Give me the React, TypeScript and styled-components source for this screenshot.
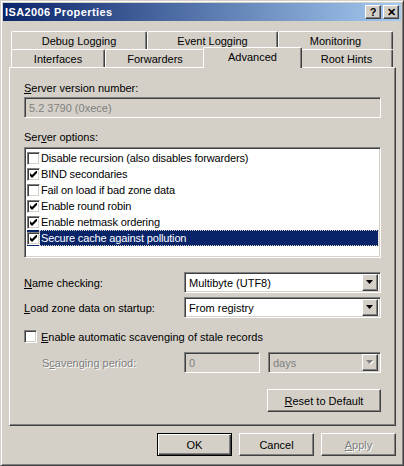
import styled, { createGlobalStyle, css } from 'styled-components';

const GlobalStyle = createGlobalStyle`
  html, body {
    margin: 0;
    padding: 0;
    background: #d4d0c8;
  }
  body {
    font-family: Tahoma, "Liberation Sans", Arial, sans-serif;
    font-size: 11px;
    color: #000;
  }
`;

const raised = css`
  border: 1px solid;
  border-color: #fff #404040 #404040 #fff;
  box-shadow: inset -1px -1px #808080, inset 1px 1px #d4d0c8;
`;

const sunken = css`
  border: 1px solid;
  border-color: #808080 #fff #fff #808080;
  box-shadow: inset 1px 1px #404040, inset -1px -1px #d4d0c8;
`;

const grayText = css`
  color: #808080;
  text-shadow: 1px 1px #fff;
`;

const Window = styled.div`
  box-sizing: border-box;
  width: 404px;
  height: 466px;
  display: flex;
  flex-direction: column;
  padding: 2px;
  background: #d4d0c8;
  border: 1px solid;
  border-color: #d4d0c8 #404040 #404040 #d4d0c8;
  box-shadow: inset 1px 1px #fff, inset -1px -1px #808080;
`;

const TitleBar = styled.div`
  height: 18px;
  display: flex;
  align-items: center;
  padding: 0 2px 0 2px;
  background: linear-gradient(to right, #0a246a, #a6caf0);
  color: #fff;
  font-weight: bold;
  letter-spacing: 0.4px;
`;

const CaptionButtons = styled.div`
  margin-left: auto;
  display: flex;
  gap: 2px;
`;

const CaptionButton = styled.div`
  box-sizing: border-box;
  width: 16px;
  height: 14px;
  ${raised};
  background: #d4d0c8;
  color: #000;
  display: flex;
  align-items: center;
  justify-content: center;
  font-weight: bold;
  font-size: 11px;
  letter-spacing: 0;
  line-height: 1;
`;

const Body = styled.div`
  flex: 1;
  display: flex;
  flex-direction: column;
  padding: 10px 5px 0 6px;
`;

const TabStrip = styled.div`
  display: flex;
  flex-direction: column;
  padding-left: 2px;
`;

const TabRow = styled.div`
  display: flex;
  height: 18px;
`;

const Tab = styled.div<{ $w: number; $selected?: boolean }>`
  box-sizing: border-box;
  width: ${p => p.$w}px;
  height: 18px;
  display: flex;
  align-items: center;
  justify-content: center;
  background: #d4d0c8;
  border-top: 1px solid #fff;
  border-left: 1px solid #fff;
  border-right: 1px solid #404040;
  border-radius: 2px 2px 0 0;
  box-shadow: inset -1px 0 #808080;
  padding-top: 1px;
  ${p =>
    p.$selected &&
    css`
      width: ${p.$w + 4}px;
      height: 21px;
      margin: -2px -2px 0;
      position: relative;
      z-index: 1;
      padding-top: 0;
      padding-bottom: 3px;
    `}
`;

const Panel = styled.div`
  box-sizing: border-box;
  width: 387px;
  height: 359px;
  display: flex;
  flex-direction: column;
  padding: 0 14px;
  border: 1px solid;
  border-color: #fff #404040 #404040 #fff;
  box-shadow: inset -1px -1px #808080;
`;

const Label = styled.div<{ $top: number; $disabled?: boolean }>`
  height: 13px;
  line-height: 13px;
  margin-top: ${p => p.$top}px;
  white-space: nowrap;
  ${p => p.$disabled && grayText};
`;

const Edit = styled.div<{ $top?: number; $w?: number; $disabled?: boolean }>`
  box-sizing: border-box;
  height: 21px;
  margin-top: ${p => p.$top ?? 0}px;
  width: ${p => (p.$w ? `${p.$w}px` : 'auto')};
  ${sunken};
  background: ${p => (p.$disabled ? '#d4d0c8' : '#fff')};
  color: ${p => (p.$disabled ? '#808080' : '#000')};
  display: flex;
  align-items: center;
  padding-left: 4px;
`;

const ListBox = styled.div`
  box-sizing: border-box;
  height: 111px;
  margin-top: 3px;
  ${sunken};
  background: #fff;
  padding: 2px;
`;

const ListItem = styled.div<{ $selected?: boolean }>`
  height: 16px;
  display: flex;
  align-items: center;
  background: ${p => (p.$selected ? '#0a246a' : 'transparent')};
  color: ${p => (p.$selected ? '#fff' : '#000')};
`;

const ItemText = styled.span<{ $focus?: boolean }>`
  flex: 1;
  height: 14px;
  line-height: 14px;
  padding-left: 1px;
  letter-spacing: -0.15px;
  outline: ${p => (p.$focus ? '1px dotted #d4d0c8' : 'none')};
  white-space: nowrap;
`;

const Box = styled.span`
  box-sizing: border-box;
  width: 13px;
  height: 13px;
  flex: none;
  ${sunken};
  background: #fff;
  display: flex;
  align-items: center;
  justify-content: center;
`;

const FieldRow = styled.div<{ $top: number }>`
  display: flex;
  align-items: center;
  margin-top: ${p => p.$top}px;
  height: 21px;
`;

const FieldLabel = styled.div<{ $disabled?: boolean }>`
  width: 160px;
  padding-left: ${p => (p.$disabled ? 18 : 0)}px;
  box-sizing: border-box;
  white-space: nowrap;
  ${p => p.$disabled && grayText};
`;

const Combo = styled.div<{ $disabled?: boolean; $gap?: number }>`
  box-sizing: border-box;
  flex: 1;
  height: 21px;
  margin-left: ${p => p.$gap ?? 0}px;
  ${sunken};
  background: ${p => (p.$disabled ? '#d4d0c8' : '#fff')};
  color: ${p => (p.$disabled ? '#808080' : '#000')};
  display: flex;
  align-items: center;
  padding: 2px;
  padding-left: 4px;
`;

const ComboText = styled.span`
  flex: 1;
`;

const DropButton = styled.span`
  box-sizing: border-box;
  width: 16px;
  height: 17px;
  ${raised};
  background: #d4d0c8;
  display: flex;
  align-items: center;
  justify-content: center;
`;

const CheckRow = styled.label`
  display: flex;
  align-items: center;
  gap: 4px;
  margin-top: 12px;
  height: 13px;
  white-space: nowrap;
`;

const ButtonRow = styled.div<{ $top: number; $gap?: number }>`
  display: flex;
  justify-content: flex-end;
  gap: ${p => p.$gap ?? 0}px;
  margin-top: ${p => p.$top}px;
`;

const Button = styled.div<{ $w: number; $default?: boolean; $disabled?: boolean }>`
  box-sizing: border-box;
  width: ${p => p.$w}px;
  height: 23px;
  display: flex;
  align-items: center;
  justify-content: center;
  background: #d4d0c8;
  ${raised};
  ${p =>
    p.$default &&
    css`
      border: 1px solid #000;
      box-shadow: inset 1px 1px #fff, inset -1px -1px #404040, inset -2px -2px #808080;
    `}
  ${p => p.$disabled && grayText};
`;

function Check() {
  return (
    <svg width="7" height="7" viewBox="0 0 7 7">
      <polygon points="0,2 2,4 7,-1 7,2 2,7 0,5" fill="#000" />
    </svg>
  );
}

function Arrow({ disabled }: { disabled?: boolean }) {
  return (
    <svg width="8" height="5" viewBox="0 0 8 5">
      {disabled && <polygon points="1,1 8,1 4.5,5" fill="#fff" />}
      <polygon points="0,0 7,0 3.5,4" fill={disabled ? '#808080' : '#000'} />
    </svg>
  );
}

const options = [
  { text: 'Disable recursion (also disables forwarders)', on: false },
  { text: 'BIND secondaries', on: true },
  { text: 'Fail on load if bad zone data', on: false },
  { text: 'Enable round robin', on: true },
  { text: 'Enable netmask ordering', on: true },
  { text: 'Secure cache against pollution', on: true },
];

export default function App() {
  return (
    <>
      <GlobalStyle />
      <Window>
        <TitleBar>
          ISA2006 Properties
          <CaptionButtons>
            <CaptionButton>?</CaptionButton>
            <CaptionButton>✕</CaptionButton>
          </CaptionButtons>
        </TitleBar>
        <Body>
          <TabStrip>
            <TabRow>
              <Tab $w={136}>Debug Logging</Tab>
              <Tab $w={131}>Event Logging</Tab>
              <Tab $w={115}>Monitoring</Tab>
            </TabRow>
            <TabRow>
              <Tab $w={94}>Interfaces</Tab>
              <Tab $w={100}>Forwarders</Tab>
              <Tab $w={95} $selected>
                Advanced
              </Tab>
              <Tab $w={93}>Root Hints</Tab>
            </TabRow>
          </TabStrip>
          <Panel>
            <Label $top={14}>
              <u>S</u>erver version number:
            </Label>
            <Edit $top={2} $disabled>
              5.2 3790 (0xece)
            </Edit>
            <Label $top={13}>
              Ser<u>v</u>er options:
            </Label>
            <ListBox>
              {options.map((o, i) => {
                const sel = i === options.length - 1;
                return (
                  <ListItem key={o.text} $selected={sel}>
                    <Box>{o.on && <Check />}</Box>
                    <ItemText $focus={sel}>{o.text}</ItemText>
                  </ListItem>
                );
              })}
            </ListBox>
            <FieldRow $top={14}>
              <FieldLabel>
                <u>N</u>ame checking:
              </FieldLabel>
              <Combo>
                <ComboText>Multibyte (UTF8)</ComboText>
                <DropButton>
                  <Arrow />
                </DropButton>
              </Combo>
            </FieldRow>
            <FieldRow $top={4}>
              <FieldLabel>
                <u>L</u>oad zone data on startup:
              </FieldLabel>
              <Combo>
                <ComboText>From registry</ComboText>
                <DropButton>
                  <Arrow />
                </DropButton>
              </Combo>
            </FieldRow>
            <CheckRow>
              <Box />
              <span>
                <u>E</u>nable automatic scavenging of stale records
              </span>
            </CheckRow>
            <FieldRow $top={9}>
              <FieldLabel $disabled>
                S<u>c</u>avenging period:
              </FieldLabel>
              <Edit $w={76} $disabled>
                0
              </Edit>
              <Combo $disabled $gap={8}>
                <ComboText>days</ComboText>
                <DropButton>
                  <Arrow disabled />
                </DropButton>
              </Combo>
            </FieldRow>
            <ButtonRow $top={16}>
              <Button $w={114}>
                <span>
                  <u>R</u>eset to Default
                </span>
              </Button>
            </ButtonRow>
          </Panel>
          <ButtonRow $top={7} $gap={7}>
            <Button $w={75} $default>
              OK
            </Button>
            <Button $w={75}>Cancel</Button>
            <Button $w={75} $disabled>
              <span>
                <u>A</u>pply
              </span>
            </Button>
          </ButtonRow>
        </Body>
      </Window>
    </>
  );
}
